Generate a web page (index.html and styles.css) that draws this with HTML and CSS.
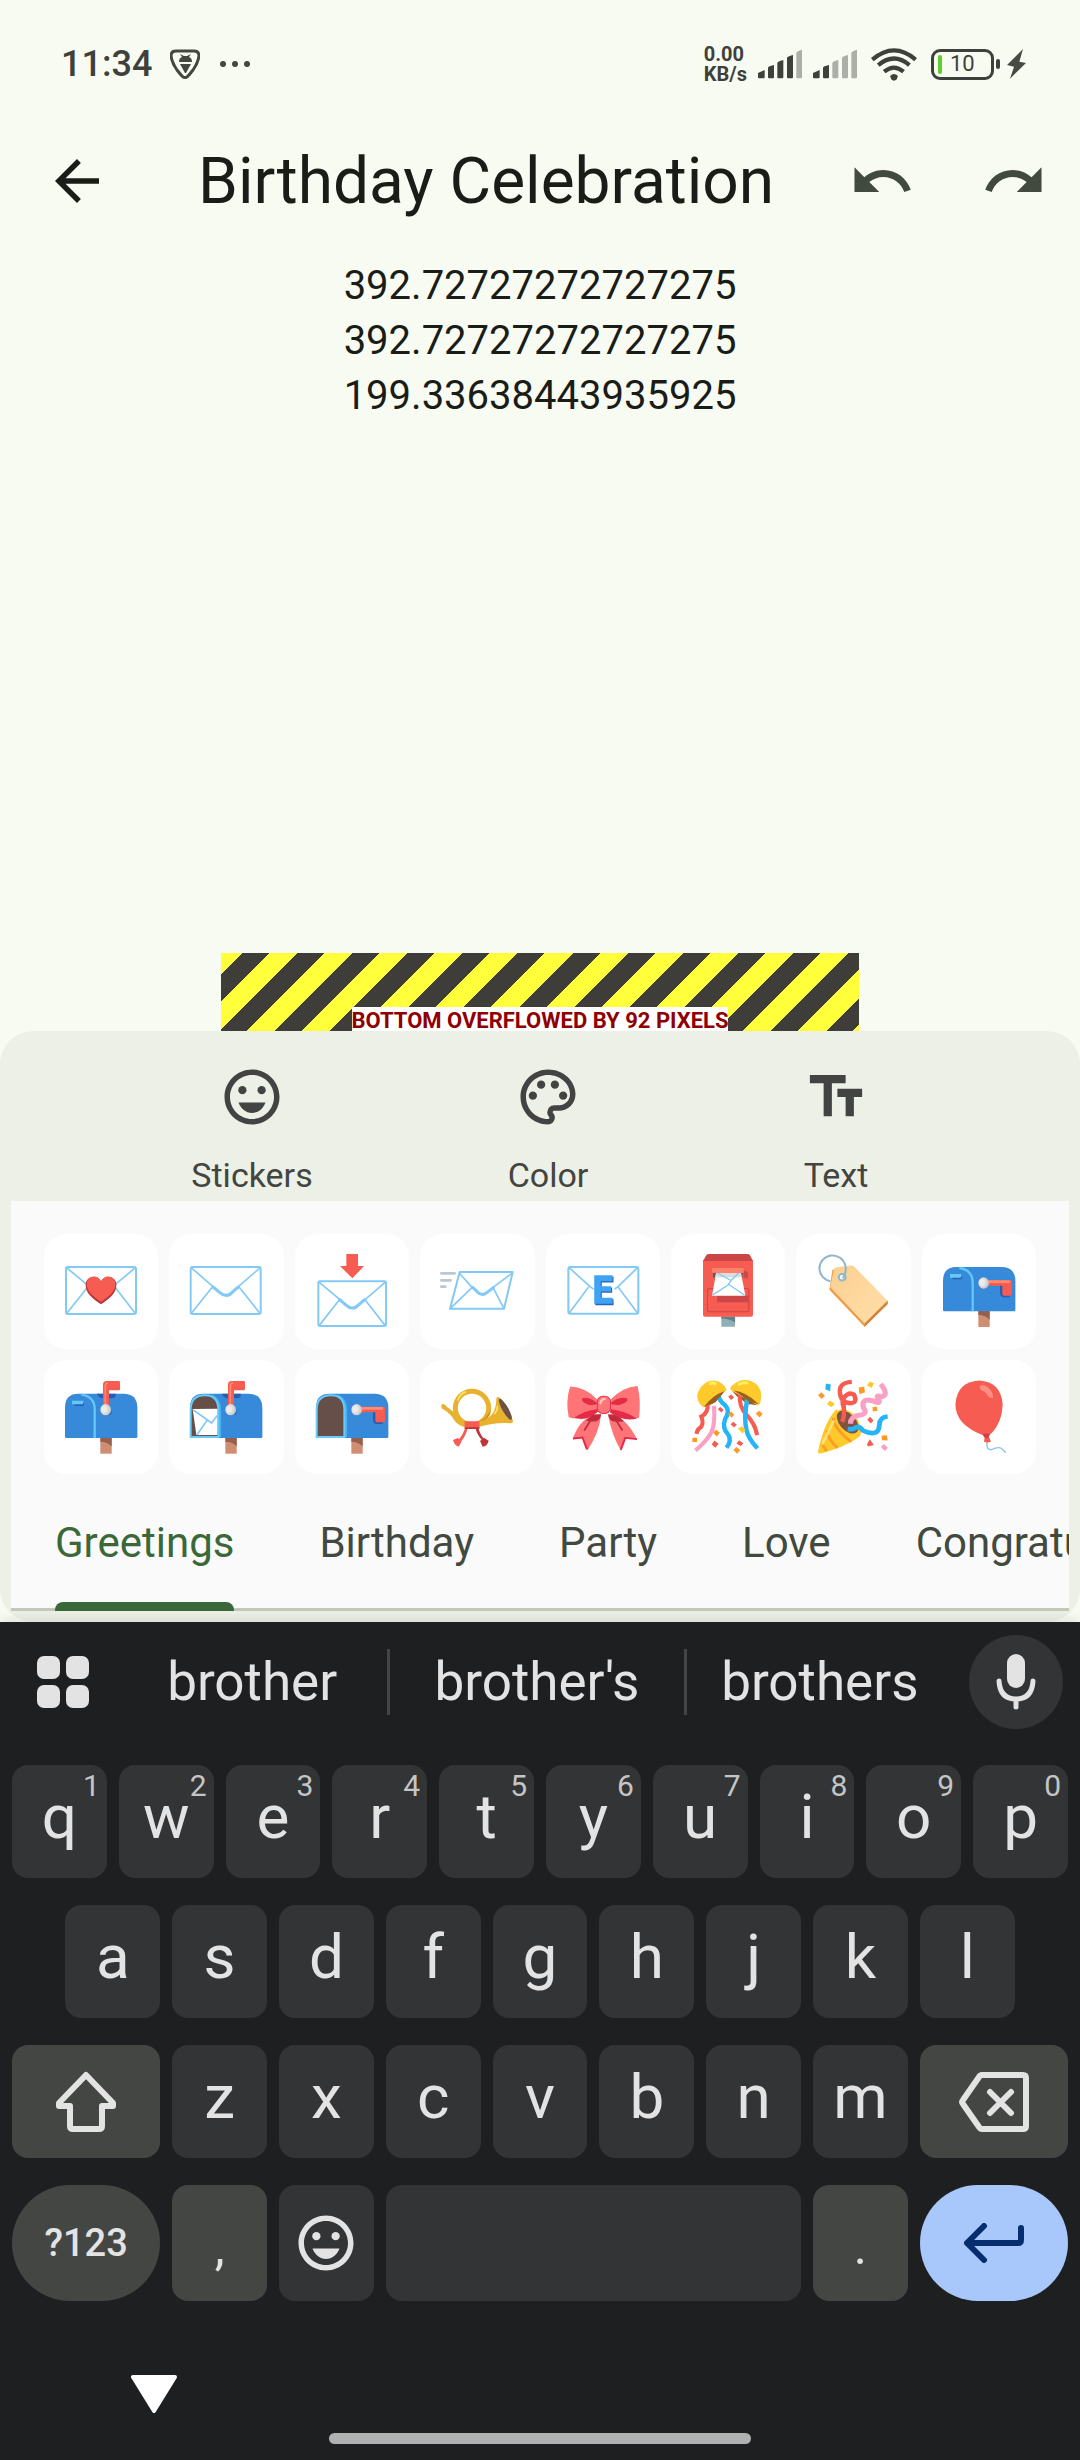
FILE: index.html
```html
<!DOCTYPE html>
<html lang="en">
<head>
<meta charset="utf-8">
<meta name="viewport" content="width=device-width, initial-scale=1">
<title>Birthday Celebration</title>
<link rel="stylesheet" href="styles.css">
</head>
<body>
<svg class="defs" aria-hidden="true">
  <defs>
    <radialGradient id="ball" cx=".35" cy=".45" r=".7"><stop offset=".3" stop-color="#ececec"/><stop offset="1" stop-color="#bdbdbd"/></radialGradient>
    <linearGradient id="tag" x1="0" y1="0" x2="1" y2="1"><stop offset="0" stop-color="#fbcf90"/><stop offset="1" stop-color="#ffdfaa"/></linearGradient>
    <g id="box">
      <path fill="#cf8d72" d="M241 680h34v49h-34z"/><path fill="#96604e" d="M241 680h34v27q-12-14-34-14z"/>
      <path fill="#3789d9" d="M135 678v-88q0-41 41-41h134q42 0 42 43v86q0 4-4 4H139q-4 0-4-4z"/>
    </g>
    <g id="door">
      <path fill="none" stroke="#62c8f8" stroke-width="7" d="M184 552q40 6 40 44v86"/>
      <path fill="#2a5fb4" d="M164 577h28v4q0 5-5 5h-23z"/><path fill="#62c9fa" d="M156 570h34v6q0 5-5 5h-29z"/>
    </g>
    <g id="open">
      <path fill="none" stroke="#45b2ef" stroke-width="7" d="M200 555q25 10 25 44v80"/>
      <path fill="#664e49" stroke="#66cdfb" stroke-width="6" d="M137 679v-81q0-44 43-44 40 0 40 44v81z"/>
    </g>
    <g id="flag-up">
      <path fill="#2a5db2" d="M230 549h57v8q-3 6-10 6h-30q-10-2-17-14z"/>
      <path fill="#f65c51" d="M249 597v-75q0-11 11-11h36q4 0 4 4v20q0 4-4 4h-29v58z"/>
      <path fill="none" stroke="#ff8b72" stroke-width="5" d="M256 585v-60q0-8 8-8"/>
      <path fill="#2a5db2" d="M262 613q12-4 12-18v14q-4 5-12 4z"/>
      <ellipse cx="257" cy="597" rx="16" ry="17" fill="url(#ball)"/>
    </g>
    <g id="flag-down">
      <path fill="#2a5db2" d="M274 603h32v28q2 8 8 9h22l-4-8-20-30z"/>
      <path fill="#f65c51" d="M270 588h66q6 0 6 6v37q0 4-4 4h-20q-5 0-5-5v-25h-43z"/>
      <path fill="#ff8b72" d="M272 589h62q4 0 2 8h-64z"/>
      <ellipse cx="257" cy="597" rx="16" ry="17" fill="url(#ball)"/>
    </g>
    <symbol id="smile" viewBox="0 0 24 24"><path d="M12 2C6.48 2 2 6.48 2 12s4.47 10 10 10 10-4.48 10-10S17.52 2 12 2zm0 18c-4.42 0-8-3.58-8-8s3.58-8 8-8 8 3.58 8 8-3.58 8-8 8z"/><circle cx="8.5" cy="9.5" r="1.5"/><circle cx="15.5" cy="9.5" r="1.5"/><path d="M7.1 14c.8 2.3 2.7 3.800 4.900 3.800s4.100-1.500 4.900-3.800z"/></symbol>
  </defs>
</svg>

<header>
  <div class="status">
    <time class="clock">11:34</time>
    <svg class="shield" viewBox="0 0 30 30"><path fill="none" stroke="#444640" stroke-width="3" stroke-linejoin="round" d="M6 2h18q5 0 5 5-1 7-6 14-3 4-6 7-2 1-4 0-3-3-6-7-5-7-6-14 0-5 5-5z"/><path fill="#444640" d="M9 13q0-4 3-5l-2-3 4 2h3l4-2-2 3q3 1 3 5zM10 15h11l-5 9h-1z"/></svg>
    <svg class="dots" viewBox="0 0 32 8"><g fill="#444640"><circle cx="4" cy="4" r="3"/><circle cx="16" cy="4" r="3"/><circle cx="28" cy="4" r="3"/></g></svg>
    <div class="rate"><div>0.00</div><div>KB/s</div></div>
    <svg class="signal" viewBox="231 89 132 90"><g fill="#3e403b"><path d="M231 161l20-9v22q0 3-3 3h-14q-3 0-3-3zM261 145q0-4 18-8v37q0 3-3 3h-12q-3 0-3-3zM289 131q0-4 18-9v52q0 3-3 3h-12q-3 0-3-3zM318 116q0-4 18-9v67q0 3-3 3h-12q-3 0-3-3z"/></g><path fill="#acafa7" d="M346 101q0-5 17-10v83q0 3-3 3h-11q-3 0-3-3z"/></svg>
    <svg class="signal" viewBox="231 89 132 90"><g fill="#3e403b"><path d="M231 161l20-9v22q0 3-3 3h-14q-3 0-3-3zM261 145q0-4 18-8v37q0 3-3 3h-12q-3 0-3-3z"/></g><path fill="#acafa7" d="M289 131q0-4 18-9v52q0 3-3 3h-12q-3 0-3-3zM318 116q0-4 18-9v67q0 3-3 3h-12q-3 0-3-3zM346 101q0-5 17-10v83q0 3-3 3h-11q-3 0-3-3z"/></svg>
    <svg class="wifi" viewBox="569 83 140 100"><g fill="none" stroke="#3e403b" stroke-width="13"><path d="M573 118q66-56 132 0M591 135q48-40 95 0M609 155q30-25 59 0"/></g><path fill="#3e403b" d="M627 168q12-12 24 0l-4 11q-8 7-16 0z"/></svg>
    <span class="battery"><i></i><b>10</b></span><span class="nub"></span>
    <svg class="bolt" viewBox="981 87 57 90"><path fill="#484a45" d="M1029 87l-11 38 20 4-48 47 12-36-21-5z"/></svg>
  </div>
  <div class="appbar">
    <button class="icon-btn back" aria-label="Back"><svg viewBox="0 0 24 24"><path d="M20 11H7.830l5.590-5.590L12 4l-8 8 8 8 1.410-1.410L7.830 13H20v-2z"/></svg></button>
    <h1>Birthday Celebration</h1>
    <button class="icon-btn" aria-label="Undo"><svg viewBox="0 0 24 24"><path d="M12.500 8c-2.650 0-5.050.99-6.900 2.600L2 7v9h9l-3.620-3.620c1.390-1.160 3.160-1.880 5.120-1.880 3.540 0 6.550 2.310 7.600 5.500l2.370-.78C21.080 11.030 17.150 8 12.500 8z"/></svg></button>
    <button class="icon-btn" aria-label="Redo"><svg viewBox="0 0 24 24"><path d="M18.400 10.600C16.550 8.990 14.150 8 11.500 8c-4.650 0-8.580 3.030-9.960 7.220L3.900 16c1.050-3.190 4.050-5.500 7.600-5.500 1.950 0 3.730.72 5.120 1.880L13 16h9V7l-3.600 3.600z"/></svg></button>
  </div>
</header>

<main>
  <p>392.72727272727275</p>
  <p>392.72727272727275</p>
  <p>199.33638443935925</p>
  <div class="overflow"><span>BOTTOM OVERFLOWED BY 92 PIXELS</span></div>
</main>

<section class="panel">
  <div class="tools">
    <button class="tool"><svg><use href="#smile"/></svg>Stickers</button>
    <button class="tool"><svg viewBox="0 0 24 24"><path d="M12 22C6.490 22 2 17.510 2 12S6.490 2 12 2s10 4.040 10 9c0 3.310-2.690 6-6 6h-1.770c-.28 0-.5.22-.5.5 0 .12.05.23.13.33.41.47.64 1.060.64 1.670A2.500 2.500 0 0 1 12 22zm0-18c-4.410 0-8 3.590-8 8s3.590 8 8 8c.28 0 .5-.22.5-.5a.54.54 0 0 0-.14-.35c-.41-.46-.63-1.050-.63-1.650a2.500 2.500 0 0 1 2.500-2.500H16c2.210 0 4-1.790 4-4 0-3.860-3.590-7-8-7z"/><circle cx="6.500" cy="11.500" r="1.500"/><circle cx="9.500" cy="7.500" r="1.500"/><circle cx="14.500" cy="7.500" r="1.500"/><circle cx="17.500" cy="11.500" r="1.500"/></svg>Color</button>
    <button class="tool"><svg viewBox="0 0 24 24"><path d="M2.500 4v3h5v12h3V7h5V4h-13zm19 5h-9v3h3v7h3v-7h3V9z"/></svg>Text</button>
  </div>
  <div class="sheet">
    <div class="stickers">
      <button aria-label="Love letter"><svg viewBox="72 72 343 343" preserveAspectRatio="none"><rect x="138" y="171" width="210" height="141" rx="6" fill="#fff" stroke="#84c9f5" stroke-width="6"/><path fill="none" stroke="#84c9f5" stroke-width="5" d="M141 174l60 50M345 174l-60 50M141 309l64-80M345 309l-62-80"/><path fill="#b9333b" d="M243 283c-28-20-46-34-46-59 0-24 32-34 46-10 14-24 46-14 46 10 0 25-18 39-46 59z"/><path fill="#f65c51" d="M243 276c-26-18-43-32-43-53 0-24 32-34 43-8 12-26 44-16 43 8 0 21-17 35-43 53z"/></svg></button>
      <button aria-label="Envelope"><svg viewBox="448 72 343 343" preserveAspectRatio="none"><rect x="513" y="171" width="210" height="141" rx="6" fill="#fff" stroke="#84c9f5" stroke-width="6"/><path fill="none" stroke="#84c9f5" stroke-width="5" d="M516 174l64 56M720 174l-64 56M516 309l62-78M720 309l-62-78"/><path fill="none" stroke="#84c9f5" stroke-width="9" stroke-linecap="round" d="M580 231c26 20 23 24 38 25s12-5 38-25"/></svg></button>
      <button aria-label="Envelope with arrow"><svg viewBox="825 72 343 343" preserveAspectRatio="none"><rect x="895" y="214" width="203" height="134" rx="5" fill="#fff" stroke="#84c9f5" stroke-width="6"/><path fill="none" stroke="#84c9f5" stroke-width="5" d="M897 216l62 52M1096 216l-60 52M898 346l60-77M1095 346l-60-77"/><path fill="none" stroke="#84c9f5" stroke-width="9" stroke-linecap="round" d="M959 269c26 20 23 24 37 25s12-5 38-25"/><path fill="#f65c51" d="M979 132h35v36h18l-35 37-37-37h19z"/></svg></button>
      <button aria-label="Incoming envelope"><svg viewBox="1200 72 343 343" preserveAspectRatio="none"><path fill="none" stroke="#b9c8d1" stroke-width="8" stroke-linecap="round" d="M1264 190h40M1264 211h28M1264 230h12"/><path fill="#fff" stroke="#84c9f5" stroke-width="6" stroke-linejoin="round" d="M1319 186h159l-26 110h-162z"/><path fill="none" stroke="#84c9f5" stroke-width="5" d="M1317 188l39 44M1478 188l-60 45M1291 295l65-62M1451 294l-31-60"/><path fill="none" stroke="#84c9f5" stroke-width="9" stroke-linecap="round" d="M1358 232c18 16 17 20 27 21s14-4 35-20"/></svg></button>
      <button aria-label="E-mail"><svg viewBox="16 72 332 344" preserveAspectRatio="none"><rect x="81" y="171" width="203" height="141" rx="6" fill="#fff" stroke="#84c9f5" stroke-width="6"/><path fill="none" stroke="#84c9f5" stroke-width="5" d="M84 174l60 56 10 8M281 174l-56 56-10 8M84 309l56-78M281 309l-56-78"/><path fill="#2c63b5" d="M159 200h53v18h-34v15h30v16h-30v19h34v18h-53z"/><path fill="#3fa3f5" d="M156 196h53v18h-34v15h30v16h-30v19h34v18h-53z"/></svg></button>
      <button aria-label="Postbox"><svg viewBox="380 72 332 344" preserveAspectRatio="none"><path fill="#8fb0b7" d="M526 320h40v31h-40z"/><path fill="#5f828b" d="M526 320h40v18q-18-12-40-12z"/><rect x="473" y="148" width="145" height="173" rx="6" fill="#f65c51"/><path fill="#cb4646" d="M473 153l10-18q2-3 6-3h113q5 0 7 3l9 18z"/><rect x="486" y="236" width="120" height="70" rx="7" fill="none" stroke="#cb4646" stroke-width="3"/><path fill="#cb4646" d="M514 257h91v20h-91zM591 180l12 8v18l-12-4z"/><path fill="#555e63" d="M502 188h86v15h-86z"/><path fill="#fff" d="M511 189h72l13 69h-97z"/><path fill="#ddd" d="M511 189h72l2 14h-77z"/><path fill="none" stroke="#84c9f5" stroke-width="4" d="M516 190l38 22-8 12M576 190l-22 22M500 256l48-32 46 32"/><rect x="499" y="174" width="92" height="15" rx="3" fill="#ff8068"/></svg></button>
      <button aria-label="Label"><svg viewBox="744 72 332 344" preserveAspectRatio="none"><path fill="#ef9b45" d="M850 178l-9 62 102 111 67-70v-8z"/><path fill="url(#tag)" d="M855 176q2-3 8-4l40-5q7 0 11 4l96 102-67 68-97-106q-3-3-2-8z"/><path fill="#cf8440" d="M943 341l67-68v10l-67 69z"/><circle cx="878" cy="202" r="10" fill="#fff" stroke="#91b7c8" stroke-width="6"/><path fill="none" stroke="#91b7c8" stroke-width="6" d="M844 214a38 39 0 1 1 43-48q5 18-7 40"/></svg></button>
      <button aria-label="Closed mailbox, flag down"><svg viewBox="72 450 343 343" preserveAspectRatio="none"><use href="#box"/><use href="#door"/><use href="#flag-down"/></svg></button>
      <button aria-label="Closed mailbox, flag up"><svg viewBox="72 448 343 343" preserveAspectRatio="none"><use href="#box"/><use href="#door"/><use href="#flag-up"/></svg></button>
      <button aria-label="Open mailbox with letter"><svg viewBox="72 448 343 343" preserveAspectRatio="none"><use href="#box"/><use href="#open"/><path fill="#fff" d="M143 595l74-1v79h-63z"/><path fill="none" stroke="#84c9f5" stroke-width="5" d="M145 598l55 39 16-22M187 628l-31 44"/><use href="#flag-up"/></svg></button>
      <button aria-label="Empty mailbox"><svg viewBox="72 448 343 343" preserveAspectRatio="none"><use href="#box"/><use href="#open"/><use href="#flag-down"/></svg></button>
      <button aria-label="Postal horn"><svg viewBox="1200 448 343 343" preserveAspectRatio="none"><path fill="#e8b22e" d="M1264 588q-2-8 7-8 6 2 9 8 24 16 34 30 14 14 24 16v16q-22-4-34-20-16-24-34-34-6-2-6-8z"/><circle cx="1356" cy="592" r="50" fill="none" stroke="#e8b22e" stroke-width="15"/><path fill="#b98a1c" d="M1375 634q34-10 38-34-8 10-17 22z"/><path fill="#e8b22e" d="M1376 634q54-12 53-72 4-6 12 0 30 30 38 70 0 6-6 6-46-4-97 11z"/><ellipse cx="1456" cy="596" rx="9" ry="36" transform="rotate(-30 1456 596)" fill="#6c5148"/><path fill="none" stroke="#ffe566" stroke-width="5" stroke-linecap="round" d="M1314 568q6-18 22-24M1432 588q0 12-8 20"/><path fill="#f65c51" d="M1336 652h7q-6 24-18 38h-11q14-16 22-38z"/><path fill="#be3439" d="M1366 652h9q6 22 20 36h-9q-14-14-20-36z"/><path fill="#f65c51" d="M1334 632h44v22h-44zM1299 688l14-6 12 10-9 16q-14-4-17-20z"/><path fill="#be3439" d="M1406 690l-14-9-12 10 8 17q14-2 18-18zM1334 650h44v5h-44z"/></svg></button>
      <button aria-label="Ribbon"><svg viewBox="16 448 332 344" preserveAspectRatio="none"><path fill="#ff7577" d="M160 612q-46 12-66 72l29-4 13 40q36-54 40-110zM208 612q42 12 72 74l-34-4-12 40q-28-50-38-110z"/><path fill="#be2b3b" d="M152 612h24q-2 16-14 20-14 2-30-2zM222 612h-26q4 18 14 20 14 4 32 0z"/><path fill="none" stroke="#e52b49" stroke-width="6" d="M94 684l28-3 13 36M280 686l-34-4-13 36"/><path fill="none" stroke="#be2b3b" stroke-width="5" d="M145 630l-18 30M220 630l18 30"/><path fill="#ff7577" d="M166 568q-34-38-80-40-14 46-4 92 34 12 84-16zM202 568q34-38 80-42 10 46 4 96-34 10-84-16z"/><path fill="#e52b49" d="M168 580q-30-26-48-16 0 14 24 20zM200 580q30-26 52-16 4 12-26 20zM164 596q-38 4-66 26 38 12 70-20zM204 596q44 6 76 28-40 10-78-18z"/><rect x="165" y="557" width="38" height="52" rx="16" fill="#ff7577" stroke="#e0344f" stroke-width="3"/><path fill="none" stroke="#ffc9c9" stroke-width="7" stroke-linecap="round" d="M174 578q2-12 12-13"/></svg></button>
      <button aria-label="Confetti balls"><svg viewBox="380 448 332 344" preserveAspectRatio="none"><path fill="#9a601c" d="M474 590l66-52-10 10-20 26-26 14zM556 540l76 44-30-4-30-22z"/><path fill="none" stroke="#f65c51" stroke-width="12" d="M486 578q4 28-18 40 10 26-6 36-6 4-8 16M580 552q-4 36 20 62t30 60"/><path fill="none" stroke="#f9a0c4" stroke-width="12" d="M505 586q4 60-10 84-12 22-44 50"/><path fill="none" stroke="#26b3f8" stroke-width="13" d="M517 550q2 20 20 34 16 16 0 42-10 26 10 48 10 16-6 38M601 566q-10 60-2 92 4 24 32 56"/><path fill="#fec92a" d="M474 590q-24-20-16-44 14-36 46-36 26 2 38 28zM556 540q-8-6 0-14 28-26 58-14 38 18 24 68l-6 4z"/><path fill="#9a601c" d="M476 588q24-34 60-47l-12 16-20 20zM562 540q36 4 72 40l-26-6-22-18z"/><path fill="none" stroke="#fff05d" stroke-width="9" stroke-linecap="round" d="M494 519q8-3 14 0M578 521q10-6 22-4"/><path fill="#ff9a25" d="M626 610l9-9 11 9-9 11zM502 667l9-9 11 9-9 11zM561 719l9-9 11 9-9 11zM546 608l9-4 9 9-9 9zM442 682h14v13h-14z"/><path fill="#f65c51" d="M546 558l9-6 8 9-9 7zM516 596l7-7 10 9-7 8zM553 641l8-7 10 9-8 8zM498 702l8-12 12 10-9 12zM570 699l8-10 12 10-8 8z"/><path fill="#fec92a" d="M574 655l12-8 10 10-8 12z"/></svg></button>
      <button aria-label="Party popper"><svg viewBox="744 448 332 344" preserveAspectRatio="none"><path fill="#fdca2b" d="M860 597q-36 42-52 126-2 8 8 6 70-18 112-50 10-12 0-34z"/><path fill="none" stroke="#ff9a25" stroke-width="8" d="M852 622q2 32 52 72M833 660q4 28 32 52M819 696q4 14 14 26"/><path fill="none" stroke="#ffe07a" stroke-width="8" d="M854 630l-34 72"/><ellipse cx="894" cy="634" rx="28" ry="44" transform="rotate(-40 894 634)" fill="#fdca2b"/><ellipse cx="894" cy="635" rx="24" ry="40" transform="rotate(-40 894 635)" fill="#7e5341"/><path fill="none" stroke="#f65c51" stroke-width="13" d="M878 634q8-16 4-52M906 514q-40 2-34 36 4 28 32 28 20-2 8-26-14-10-28 8-8 14-2 28"/><path fill="none" stroke="#f9a0c4" stroke-width="15" d="M902 640q0-22 24-26 28-2 14-22-8-30 24-22 28 14 20-4-12-14 10-8 20-6-4-38"/><path fill="none" stroke="#26b3f8" stroke-width="14" d="M894 656q18 2 26-6 8-4 18 10 46 22 48-16 0-24 24-26"/><path fill="#26b3f8" d="M831 519l14 3-2 20-14-6z"/><path fill="#ff9a25" d="M808 553l10-8 10 11-10 9zM926 531l16-3 2 18-16 4zM966 590l12-2 3 13-14 2zM992 676l16-2 2 16-16-1z"/><path fill="#fec92a" d="M834 580l9-10 14 10-10 10zM950 525l8-12 12 5-6 14z"/><path fill="#f65c51" d="M951 628l8-9 10 11-8 9zM950 702l8-16 12 18-17 4z"/><path fill="#f9a0c4" d="M990 710l9-9 12 11-9 10z"/></svg></button>
      <button aria-label="Balloon"><svg viewBox="1108 448 332 344" preserveAspectRatio="none"><path fill="none" stroke="#83c0ef" stroke-width="4" d="M1297 694q-4 24 12 24 24-12 32-2l10 11"/><path fill="#f65c51" d="M1289 676q-84-32-84-94 4-68 69-72 64 4 68 72-2 60-40 94z"/><path fill="#f65c51" d="M1290 678h12l6 16q-10 5-20 0z"/><path fill="#c9423f" d="M1285 671q10-4 20 0l-3 8-7 4-8-4z"/><path fill="#ff8f80" d="M1276 526q10-8 26 6 14 16 12 30-12 2-18-12-6-8-14-10-8-6-6-14z"/></svg></button>
    </div>
    <div class="tabs" role="tablist">
      <button role="tab" class="active" aria-selected="true">Greetings</button>
      <button role="tab">Birthday</button>
      <button role="tab">Party</button>
      <button role="tab">Love</button>
      <button role="tab">Congratulations</button>
    </div>
  </div>
</section>

<section class="keyboard">
  <div class="suggest">
    <button class="menu" aria-label="Keyboard menu"><i></i><i></i><i></i><i></i></button>
    <button>brother</button>
    <button class="mid">brother's</button>
    <button>brothers</button>
    <button class="mic" aria-label="Voice input"><svg viewBox="0 0 94 94"><rect x="38" y="19" width="18" height="34" rx="9" fill="#e3e3e3"/><path fill="none" stroke="#e3e3e3" stroke-width="5" stroke-linecap="round" d="M30 46q1 18 17 18t17-18M47 65v7"/></svg></button>
  </div>
  <div class="keys">
    <button>q<sup>1</sup></button><button>w<sup>2</sup></button><button>e<sup>3</sup></button><button>r<sup>4</sup></button><button>t<sup>5</sup></button><button>y<sup>6</sup></button><button>u<sup>7</sup></button><button>i<sup>8</sup></button><button>o<sup>9</sup></button><button>p<sup>0</sup></button>
    <button class="indent">a</button><button>s</button><button>d</button><button>f</button><button>g</button><button>h</button><button>j</button><button>k</button><button>l</button>
    <button class="k3 mod indent-reset" aria-label="Shift"><svg class="shift" viewBox="0 0 62 62"><path fill="none" stroke="#e3e3e3" stroke-width="6" stroke-linejoin="round" d="M31 4L4 32v3h11v20q0 3 3 3h26q3 0 3-3V35h11v-3z"/></svg></button><button>z</button><button>x</button><button>c</button><button>v</button><button>b</button><button>n</button><button>m</button><button class="k3 mod" aria-label="Backspace"><svg class="bksp" viewBox="0 0 70 60"><path fill="none" stroke="#e3e3e3" stroke-width="6" stroke-linejoin="round" stroke-linecap="round" d="M23 3h41q3 0 3 3v48q0 3-3 3H23q-2 0-3-2L4 32q-2-2 0-4L20 5q1-2 3-2zM31 20l21 21M52 20L31 41"/></svg></button>
    <button class="k3 mod pill sym">?123</button><button class="mod punct">,</button><button aria-label="Emoji"><svg class="smiley"><use href="#smile"/></svg></button><button class="k8" aria-label="Space"></button><button class="mod punct">.</button><button class="k3 pill enter" aria-label="Enter"><svg viewBox="0 0 60 40"><path fill="none" stroke="#062e6f" stroke-width="6" stroke-linejoin="round" stroke-linecap="round" d="M57 5v12q0 3-3 3H4M20 3L3 20l17 17"/></svg></button>
  </div>
  <div class="nav">
    <button class="hide" aria-label="Hide keyboard"><svg viewBox="0 0 46 38"><path fill="#fff" stroke="#fff" stroke-width="4" stroke-linejoin="round" d="M2 2h42L23 36z"/></svg></button>
    <div class="home"></div>
  </div>
</section>
</body>
</html>
```
FILE: styles.css
```css
* { box-sizing: border-box; margin: 0; }
body {
  min-height: 100vh;
  display: flex;
  flex-direction: column;
  background: #f8fbf1;
  color: #1a1c18;
  font-family: Roboto, "Noto Sans", sans-serif;
  overflow-x: hidden;
}
button {
  border: 0;
  padding: 0;
  background: none;
  color: inherit;
  font: inherit;
}
svg { display: block; flex: none; }
.defs { position: absolute; width: 0; height: 0; }

/* status bar */
.status {
  display: flex;
  align-items: center;
  height: 104px;
  padding: 24px 54px 0 61px;
  color: #3e403b;
}
.clock { font-size: 36px; font-weight: 500; line-height: 48px; }
.shield { width: 30px; height: 30px; margin-left: 18px; }
.dots { width: 32px; height: 8px; margin-left: 19px; }
.rate {
  margin-left: auto;
  font-size: 20px;
  font-weight: 700;
  line-height: 20px;
}
.signal { width: 44px; height: 30px; margin-left: 11px; }
.wifi { width: 46px; height: 33px; margin-left: 14px; }
.battery {
  display: flex;
  align-items: center;
  width: 63px;
  height: 31px;
  margin-left: 14px;
  border: 3px solid #3e403b;
  border-radius: 9px;
  padding-left: 4px;
  gap: 8px;
}
.battery i { width: 4px; height: 19px; border-radius: 2px; background: #62cc28; }
.battery b { font-size: 22px; font-weight: 400; line-height: 24px; }
.nub { width: 4px; height: 10px; margin-left: 2px; border-radius: 2px; background: #3e403b; }
.bolt { width: 19px; height: 30px; margin-left: 7px; }

/* app bar */
.appbar { display: flex; align-items: center; height: 154px; }
.appbar h1 {
  flex: 1;
  padding-top: 2px;
  font-size: 64px;
  font-weight: 400;
  line-height: 72px;
  white-space: nowrap;
}
.icon-btn { display: grid; place-items: center; flex: none; width: 132px; height: 132px; }
.icon-btn svg { width: 66px; height: 66px; fill: #42493f; }
.back { width: 154px; margin-right: 44px; }
.back svg { fill: #1a1c18; }

/* editor area */
main {
  flex: 1;
  display: flex;
  flex-direction: column;
  align-items: center;
}
main p { font-size: 40px; line-height: 55px; }
.overflow {
  display: flex;
  justify-content: center;
  align-items: flex-end;
  width: 59%;
  height: 78px;
  margin-top: auto;
  background: repeating-linear-gradient(135deg, #ffff3b 0 15px, #3e3d3a 15px 34px, #ffff3b 34px 39px);
}
.overflow span {
  padding-top: 4px;
  background: #fff;
  color: #900000;
  font-size: 22px;
  font-weight: 700;
  line-height: 20px;
}

/* sticker panel */
.panel {
  padding-bottom: 11px;
  border-radius: 33px;
  background: #edf0e7;
}
.tools { display: flex; justify-content: space-evenly; padding: 33px 0 6px; }
.tool {
  display: flex;
  flex-direction: column;
  align-items: center;
  gap: 25px;
  min-width: 88px;
  color: #434540;
  font-size: 34px;
  line-height: 40px;
}
.tool svg { width: 66px; height: 66px; fill: #434343; }
.tool:first-child { min-width: 126px; }
.tool:last-child { min-width: 110px; }
.sheet { margin: 0 11px; background: #fafafa; }
.stickers {
  display: grid;
  grid-template-columns: repeat(8, 1fr);
  gap: 11px;
  padding: 33px 33px 0;
}
.stickers button { aspect-ratio: 1; border-radius: 22px; background: #fff; }
.stickers svg { width: 100%; height: 100%; }
.tabs {
  display: flex;
  gap: 85px;
  padding-left: 44px;
  overflow: hidden;
  box-shadow: inset 0 -3px #c2c9bb;
}
.tabs button {
  position: relative;
  flex: none;
  padding: 45px 0 44px;
  color: #42493f;
  font-size: 42px;
  line-height: 48px;
}
.tabs .active { color: #3a6838; }
.active::after {
  content: "";
  position: absolute;
  left: 0;
  right: 0;
  bottom: 0;
  height: 9px;
  border-radius: 8px 8px 0 0;
  background: #3a6838;
}

/* keyboard */
.keyboard {
  background: #1e1f21;
  color: #e3e3e3;
  box-shadow: 0 -2px 12px rgba(0, 0, 0, .1);
}
.suggest {
  display: grid;
  grid-template-columns: 80px 270fr 299fr 266fr 110px;
  align-items: center;
  height: 120px;
  padding: 0 17px 0 37px;
  font-size: 53px;
  line-height: 66px;
}
.mid { border: solid #444547; border-width: 0 3px; }
.menu { display: grid; grid-template-columns: 23px 23px; gap: 6px; }
.menu i { height: 23px; border-radius: 7px; background: #e3e3e3; }
.mic { justify-self: end; width: 94px; height: 94px; border-radius: 50%; background: #333436; }
.keys {
  display: grid;
  grid-template-columns: repeat(20, 1fr);
  grid-template-rows: 113px 113px 113px 116px;
  gap: 27px 12px;
  padding: 23px 12px 0;
}
.keys button {
  position: relative;
  display: flex;
  justify-content: center;
  align-items: center;
  grid-column: span 2;
  border-radius: 16px;
  background: #333436;
  font-size: 62px;
  line-height: 72px;
  padding-bottom: 10px;
}
.keys .indent { grid-column: 2 / span 2; }
.keys .k3 { grid-column: span 3; }
.keys .k8 { grid-column: span 8; }
.keys .indent-reset { grid-column: 1 / span 3; }
.keys .mod { background: #444644; }
.keys .pill { border-radius: 58px; }
.keys .enter { background: #a8c7fa; }
.keys .sym { font-size: 38px; font-weight: 500; padding: 0; }
.keys .punct { font-size: 50px; padding: 8px 0 0; }
.keys button:has(svg) { padding: 0; }
.keys sup {
  position: absolute;
  top: 6px;
  right: 7px;
  color: #c4c5c4;
  font-size: 30px;
  line-height: 30px;
}
.shift { width: 62px; height: 62px; }
.bksp { width: 70px; height: 60px; }
.smiley { width: 66px; height: 66px; fill: #e3e3e3; }
.enter svg { width: 60px; height: 40px; }
.nav { padding: 74px 0 16px; }
.hide { display: block; margin: 0 0 20px 131px; }
.hide svg { width: 46px; height: 38px; }
.home { width: 39%; height: 11px; margin: 0 auto; border-radius: 6px; background: #b0b2b1; }
```
